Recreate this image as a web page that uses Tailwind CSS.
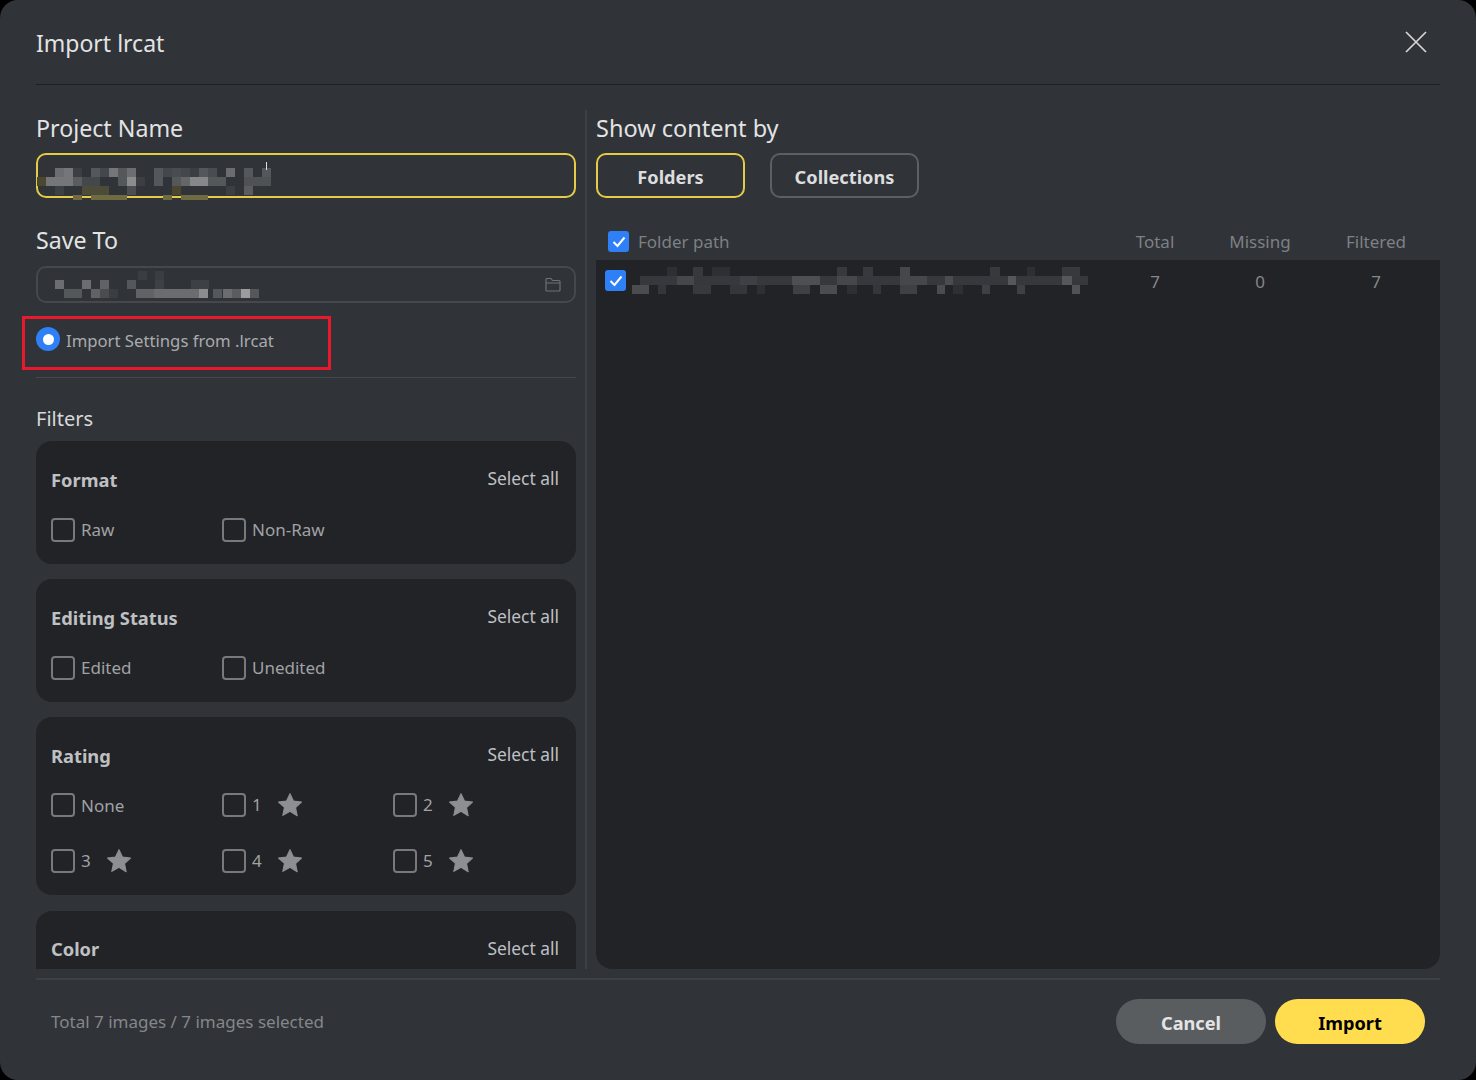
<!doctype html>
<html>
<head>
<meta charset="utf-8">
<script src="https://cdn.jsdelivr.net/npm/@tailwindcss/browser@4"></script>
</head>
<body class="bg-black font-['Noto_Sans',sans-serif] overflow-hidden">
<div class="relative w-[1476px] h-[1080px] bg-[#303338] rounded-[18px] flex flex-col pl-[36px] pr-[36px] overflow-hidden">
  <header class="h-[85px] shrink-0 border-b border-[#1d1f22] flex items-center justify-between pt-[2px]">
    <h1 class="text-[23px] leading-[32px] text-[#e2e3e4]">Import lrcat</h1>
    <button class="mr-[13px] mb-[3px] text-[#d5d6d7]"><svg width="22" height="22" viewBox="0 0 22 22" fill="none" stroke="currentColor" stroke-width="1.7"><path d="M1 1l20 20M21 1L1 21"/></svg></button>
  </header>
  <main class="flex h-[884px] shrink-0">
    <section class="w-[549px] h-[884px] shrink-0 overflow-hidden">
      <div class="w-[540px]">
        <h2 class="mt-[27px] text-[23.2px] leading-[32px] text-[#e2e3e4]">Project Name</h2>
        <div class="relative mt-[9px] h-[45px] border-2 border-[#e6cb47] rounded-[10px]">
          <svg class="absolute left-[-1px] top-[13px]" width="240" height="36" shape-rendering="crispEdges" fill="none" stroke-width="9">
            <path stroke="#6b6d70" d="M18 4h9M90 4h9"/><path stroke="#74767a" d="M27 4h9M72 4h9"/>
            <path stroke="#55585b" d="M54 4h9M81 4h9M117 4h9M162 4h18M207 4h9"/><path stroke="#44474b" d="M63 4h9M126 4h9M144 4h9"/><path stroke="#4a4d50" d="M135 4h9M171 4h9"/><path stroke="#3b3e42" d="M36 4h9M153 4h9"/><path stroke="#6a6c6f" d="M189 4h9"/><path stroke="#55585b" d="M225 4h9"/>
            <path stroke="#4a4930" d="M0 13h9"/><path stroke="#74767a" d="M9 13h27"/><path stroke="#5a5c60" d="M36 13h9"/><path stroke="#44474b" d="M45 13h18"/><path stroke="#55585b" d="M81 13h9M117 13h9M135 13h9M171 13h18"/><path stroke="#8a8c8e" d="M90 13h9"/><path stroke="#3b3e42" d="M99 13h9"/><path stroke="#85878a" d="M153 13h18"/><path stroke="#666" d="M144 13h9"/><path stroke="#4f5255" d="M207 13h9M216 13h18"/>
            <path stroke="#3d4044" d="M18 22h9"/><path stroke="#4d4c38" d="M45 22h27"/><path stroke="#4b4e52" d="M90 22h9"/><path stroke="#4a4630" d="M135 22h9"/><path stroke="#3b3e42" d="M189 22h9"/><path stroke="#5a5c5f" d="M207 22h9"/>
            <path stroke="#6f6a42" stroke-width="5" d="M36 29h9M54 29h36M126 29h9M144 29h27"/>
          </svg>
          <div class="absolute left-[228px] top-[7px] w-px h-[8px] bg-[#ddd]"></div>
        </div>
        <h2 class="mt-[26px] text-[23.2px] leading-[32px] text-[#e2e3e4]">Save To</h2>
        <div class="relative mt-[10px] h-[37px] border-2 border-[#45484c] rounded-[10px] flex items-center justify-end pr-[13px]">
          <svg class="absolute left-[17px] top-[3px]" width="210" height="30" shape-rendering="crispEdges" fill="none" stroke-width="9">
            <path stroke="#3a3d41" d="M83 4h9M100 4h9"/>
            <path stroke="#6b6d70" d="M0 13h9M27 13h9"/><path stroke="#606265" d="M45 13h9"/><path stroke="#55585b" d="M72 13h9"/><path stroke="#3d4044" d="M100 13h9M136 13h18"/>
            <path stroke="#55585b" d="M9 22h18M158 22h9"/><path stroke="#606265" d="M36 22h9M81 22h18"/><path stroke="#4a4d50" d="M45 22h9"/><path stroke="#3a3d41" d="M54 22h9"/><path stroke="#6a6c6f" d="M99 22h45M168 22h9"/><path stroke="#8a8c8e" d="M144 22h9"/><path stroke="#5a5c60" d="M177 22h9"/><path stroke="#9a9c9e" d="M186 22h9"/><path stroke="#55585b" d="M195 22h9"/>
          </svg>
          <svg width="16" height="15" viewBox="0 0 16 15" fill="none" stroke="#6d7074" stroke-width="1.2"><path d="M1 13V2.5a1 1 0 0 1 1-1h4l1.5 2H14a1 1 0 0 1 1 1V13a1 1 0 0 1-1 1H2a1 1 0 0 1-1-1zM1 6h14"/></svg>
        </div>
        <div class="relative mt-[24px] h-[24px] flex items-center gap-[6px]">
          <span class="w-[24px] h-[24px] rounded-full bg-[#2f7ff7] flex items-center justify-center"><span class="w-[11px] h-[11px] rounded-full bg-white"></span></span>
          <span class="mt-[3px] text-[16.7px] leading-[24px] text-[#a9abad]">Import Settings from .lrcat</span>
        </div>
        <div class="mt-[26px] h-px bg-[#44474b]"></div>
        <h3 class="mt-[27px] text-[20px] leading-[28px] text-[#d8d9da]">Filters</h3>
        <div class="mt-[8px] flex flex-col gap-[15px]">
          <div class="h-[123px] bg-[#212327] rounded-[16px] pl-[15px] pr-[17px] pt-[26px]">
            <div class="flex justify-between h-[26px]"><b class="text-[18.3px] leading-[26px] font-bold text-[#bfc0c2]">Format</b><span class="text-[17.4px] leading-[22px] text-[#bfc0c2]">Select all</span></div>
            <div class="mt-[25px] -translate-y-px grid grid-cols-[171px_171px_171px] h-[24px]">
              <label class="flex items-center gap-[6px]"><span class="w-[24px] h-[24px] rounded-[4px] border-2 border-[#77797c]"></span><span class="text-[17px] text-[#a0a2a4]">Raw</span></label>
              <label class="flex items-center gap-[6px]"><span class="w-[24px] h-[24px] rounded-[4px] border-2 border-[#77797c]"></span><span class="text-[17px] text-[#a0a2a4]">Non-Raw</span></label>
            </div>
          </div>
          <div class="h-[123px] bg-[#212327] rounded-[16px] pl-[15px] pr-[17px] pt-[26px]">
            <div class="flex justify-between h-[26px]"><b class="text-[18.3px] leading-[26px] font-bold text-[#bfc0c2]">Editing Status</b><span class="text-[17.4px] leading-[22px] text-[#bfc0c2]">Select all</span></div>
            <div class="mt-[25px] -translate-y-px grid grid-cols-[171px_171px_171px] h-[24px]">
              <label class="flex items-center gap-[6px]"><span class="w-[24px] h-[24px] rounded-[4px] border-2 border-[#77797c]"></span><span class="text-[17px] text-[#a0a2a4]">Edited</span></label>
              <label class="flex items-center gap-[6px]"><span class="w-[24px] h-[24px] rounded-[4px] border-2 border-[#77797c]"></span><span class="text-[17px] text-[#a0a2a4]">Unedited</span></label>
            </div>
          </div>
          <div class="h-[178px] bg-[#212327] rounded-[16px] pl-[15px] pr-[17px] pt-[26px]">
            <div class="flex justify-between h-[26px]"><b class="text-[18.3px] leading-[26px] font-bold text-[#bfc0c2]">Rating</b><span class="text-[17.4px] leading-[22px] text-[#bfc0c2]">Select all</span></div>
            <div class="mt-[24px] grid grid-cols-[171px_171px_171px] gap-y-[32px]">
              <label class="flex items-center gap-[6px] h-[24px]"><span class="w-[24px] h-[24px] rounded-[4px] border-2 border-[#77797c]"></span><span class="mt-[2px] text-[17px] text-[#a0a2a4]">None</span></label>
              <label class="flex items-center h-[24px]"><span class="w-[24px] h-[24px] rounded-[4px] border-2 border-[#77797c]"></span><span class="w-[31px] pl-[6px] text-[17px] text-[#a0a2a4]">1</span><svg width="26" height="26" viewBox="0 0 24 24" fill="#8e8f91"><path d="M12 1.5l3.2 6.9 7.4.9-5.5 5.1 1.5 7.5L12 17.9l-6.6 3.7 1.5-7.5L1.4 9.3l7.4-.9z" stroke="#8e8f91" stroke-linejoin="round"/></svg></label>
              <label class="flex items-center h-[24px]"><span class="w-[24px] h-[24px] rounded-[4px] border-2 border-[#77797c]"></span><span class="w-[31px] pl-[6px] text-[17px] text-[#a0a2a4]">2</span><svg width="26" height="26" viewBox="0 0 24 24" fill="#8e8f91"><path d="M12 1.5l3.2 6.9 7.4.9-5.5 5.1 1.5 7.5L12 17.9l-6.6 3.7 1.5-7.5L1.4 9.3l7.4-.9z" stroke="#8e8f91" stroke-linejoin="round"/></svg></label>
              <label class="flex items-center h-[24px]"><span class="w-[24px] h-[24px] rounded-[4px] border-2 border-[#77797c]"></span><span class="w-[31px] pl-[6px] text-[17px] text-[#a0a2a4]">3</span><svg width="26" height="26" viewBox="0 0 24 24" fill="#8e8f91"><path d="M12 1.5l3.2 6.9 7.4.9-5.5 5.1 1.5 7.5L12 17.9l-6.6 3.7 1.5-7.5L1.4 9.3l7.4-.9z" stroke="#8e8f91" stroke-linejoin="round"/></svg></label>
              <label class="flex items-center h-[24px]"><span class="w-[24px] h-[24px] rounded-[4px] border-2 border-[#77797c]"></span><span class="w-[31px] pl-[6px] text-[17px] text-[#a0a2a4]">4</span><svg width="26" height="26" viewBox="0 0 24 24" fill="#8e8f91"><path d="M12 1.5l3.2 6.9 7.4.9-5.5 5.1 1.5 7.5L12 17.9l-6.6 3.7 1.5-7.5L1.4 9.3l7.4-.9z" stroke="#8e8f91" stroke-linejoin="round"/></svg></label>
              <label class="flex items-center h-[24px]"><span class="w-[24px] h-[24px] rounded-[4px] border-2 border-[#77797c]"></span><span class="w-[31px] pl-[6px] text-[17px] text-[#a0a2a4]">5</span><svg width="26" height="26" viewBox="0 0 24 24" fill="#8e8f91"><path d="M12 1.5l3.2 6.9 7.4.9-5.5 5.1 1.5 7.5L12 17.9l-6.6 3.7 1.5-7.5L1.4 9.3l7.4-.9z" stroke="#8e8f91" stroke-linejoin="round"/></svg></label>
            </div>
          </div>
          <div class="mt-[1px] h-[123px] bg-[#212327] rounded-[16px] pl-[15px] pr-[17px] pt-[25px]">
            <div class="flex justify-between h-[26px]"><b class="text-[18.3px] leading-[26px] font-bold text-[#bfc0c2]">Color</b><span class="text-[17.4px] leading-[24px] text-[#bfc0c2]">Select all</span></div>
          </div>
        </div>
      </div>
    </section>
    <section class="flex-1 h-[859px] mt-[25px] border-l-2 border-[#3d4045] pl-[9px] flex flex-col">
      <h2 class="mt-[2px] text-[23.5px] leading-[32px] text-[#e2e3e4]">Show content by</h2>
      <div class="mt-[9px] flex gap-[25px]">
        <button class="w-[149px] h-[45px] border-2 border-[#e6cb47] rounded-[10px] pt-[4px] text-[18.2px] font-bold text-[#dcddde]">Folders</button>
        <button class="w-[149px] h-[45px] border-2 border-[#5c5f63] rounded-[10px] pt-[4px] text-[18.2px] font-bold text-[#dcddde]">Collections</button>
      </div>
      <div class="mt-[33px] h-[29px] shrink-0 grid grid-cols-[1fr_106px_104px_128px] items-start text-[17px] leading-[22px] text-[#7e8084] text-center">
        <div class="flex items-center gap-[9px] pl-[12px] text-left">
          <span class="-mt-[1px] w-[21px] h-[21px] rounded-[3px] bg-[#2f7ff7] flex items-center justify-center"><svg width="14" height="12" viewBox="0 0 14 12" fill="none" stroke="#fff" stroke-width="2"><path d="M1.5 6l4 4 7-8.5"/></svg></span>
          <span>Folder path</span>
        </div>
        <span>Total</span><span>Missing</span><span>Filtered</span>
      </div>
      <div class="flex-1 bg-[#212327] rounded-b-[16px]">
        <div class="relative mt-0 pt-[10px] grid grid-cols-[1fr_106px_104px_128px] text-[17px] leading-[22px] text-[#85878a] text-center">
          <div class="flex items-start gap-[6px] pl-[9px]">
            <span class="w-[21px] h-[21px] rounded-[3px] bg-[#2f7ff7] flex items-center justify-center"><svg width="14" height="12" viewBox="0 0 14 12" fill="none" stroke="#fff" stroke-width="2"><path d="M1.5 6l4 4 7-8.5"/></svg></span>
            <svg class="-mt-[3px]" width="460" height="28" shape-rendering="crispEdges" fill="none" stroke-width="9">
              <path stroke="#2d2f33" d="M35 4h10M80 4h18M395 4h8"/><path stroke="#38393d" d="M61 4h10M231 4h10M205 4h10M358 4h10M430 4h18"/><path stroke="#45474a" d="M268 4h10"/>
              <path stroke="#35383c" d="M8 13h448"/><path stroke="#4d4f52" d="M160 13h28"/><path stroke="#45474a" d="M45 13h17M205 13h20M268 13h27"/><path stroke="#3d4044" d="M108 13h17"/><path stroke="#4a4c4f" d="M313 13h8"/><path stroke="#55575a" d="M376 13h8M430 13h10"/>
              <path stroke="#4a4c4f" d="M0 22h17M188 22h17M305 22h8"/><path stroke="#33363a" d="M26 22h8M98 22h17M241 22h8"/><path stroke="#38393d" d="M61 22h18"/><path stroke="#2d2f33" d="M125 22h8M215 22h10M321 22h10"/><path stroke="#3d4044" d="M161 22h17M268 22h17M350 22h8M385 22h8"/><path stroke="#505256" d="M440 22h8"/>
            </svg>
          </div>
          <span class="mt-[1px]">7</span><span class="mt-[1px]">0</span><span class="mt-[1px]">7</span>
        </div>
      </div>
    </section>
  </main>
  <footer class="mt-[9px] border-t-2 border-[#3d4045] h-[102px] shrink-0 flex items-start justify-between pl-[15px] pr-[15px] pt-[19px]">
    <span class="mt-[11px] text-[17px] leading-[24px] text-[#85878a]">Total 7 images / 7 images selected</span>
    <div class="flex gap-[9px]">
      <button class="w-[150px] h-[45px] rounded-full bg-[#5a5d60] pt-[5px] text-[18.2px] font-bold text-[#e4e5e6]">Cancel</button>
      <button class="w-[150px] h-[45px] rounded-full bg-[#ffdd4f] pt-[5px] text-[18.2px] font-bold text-black">Import</button>
    </div>
  </footer>
  <div class="absolute left-[22px] top-[316px] w-[309px] h-[54px] border-[3px] border-[#e8192c]"></div>
</div>
</body>
</html>
